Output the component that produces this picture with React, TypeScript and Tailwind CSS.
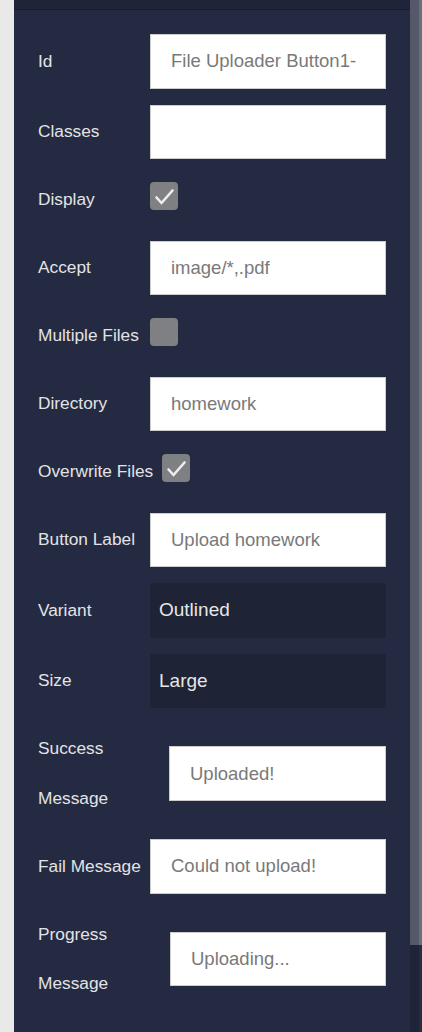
import React from "react";

const labelCls =
  "shrink-0 text-[17.3px] text-[#e3e3e5] font-['Liberation_Sans',Arial,sans-serif]";

function Check({ checked }: { checked: boolean }) {
  return (
    <div className="mt-[7px] h-[28px] w-[28px] shrink-0 self-start rounded-[4px] bg-[#7f8084]">
      {checked && (
        <svg viewBox="0 0 28 28" className="h-[28px] w-[28px]">
          <path
            d="M6.5 15.5 L11.5 21 L22.5 8.5"
            fill="none"
            stroke="#eeeeee"
            strokeWidth="2.6"
            strokeLinecap="round"
            strokeLinejoin="round"
          />
        </svg>
      )}
    </div>
  );
}

function InputBox({ value }: { value: string }) {
  return (
    <div className="flex h-[54.5px] min-w-0 flex-1 items-center border border-[#cdcdcd] bg-white pl-[20px] pr-[20px]">
      <div className="min-w-0 flex-1 overflow-hidden whitespace-nowrap text-[18.5px] text-[#797979]">
        {value}
      </div>
    </div>
  );
}

function InputRow({ label, value, w = "w-[112px]" }: { label: string; value: string; w?: string }) {
  return (
    <div className="flex items-center">
      <div className={`${labelCls} ${w} pt-[1px]`}>{label}</div>
      <InputBox value={value} />
    </div>
  );
}

function TwoLineRow({ l1, l2, value, w }: { l1: string; l2: string; value: string; w: string }) {
  return (
    <div className="flex items-center">
      <div className={`${labelCls} ${w} leading-[49.5px]`}>
        <div>{l1}</div>
        <div>{l2}</div>
      </div>
      <InputBox value={value} />
    </div>
  );
}

function CheckRow({ label, checked, w = "w-[112px]" }: { label: string; checked: boolean; w?: string }) {
  return (
    <div className="flex h-[49.5px] items-center">
      <div className={`${labelCls} ${w} pt-[1px]`}>{label}</div>
      <Check checked={checked} />
    </div>
  );
}

function SelectRow({ label, value }: { label: string; value: string }) {
  return (
    <div className="flex items-center">
      <div className={`${labelCls} w-[112px] pt-[1px]`}>{label}</div>
      <div className="flex h-[54.5px] flex-1 items-center rounded-[3px] bg-[#1e2335] pl-[9px] text-[19px] text-[#e6e6e8]">
        {value}
      </div>
    </div>
  );
}

export default function App() {
  return (
    <div className="flex h-[1032px] w-[422px] overflow-hidden font-['Liberation_Sans',Arial,sans-serif]">
      <div className="w-[14px] shrink-0 bg-[#e9e9e9]" />
      <div className="flex w-[396px] shrink-0 flex-col bg-[#232a42]">
        <div className="h-[10px] shrink-0 border-b border-[#171c2c] bg-[#1f2438]" />
        <div className="flex flex-col gap-[16px] pl-[24px] pr-[24px] pt-[24px]">
          <InputRow label="Id" value="File Uploader Button1-" />
          <InputRow label="Classes" value="" />
          <CheckRow label="Display" checked />
          <InputRow label="Accept" value="image/*,.pdf" />
          <CheckRow label="Multiple Files" checked={false} />
          <InputRow label="Directory" value="homework" />
          <CheckRow label="Overwrite Files" checked w="w-[124px]" />
          <InputRow label="Button Label" value="Upload homework" />
          <SelectRow label="Variant" value="Outlined" />
          <SelectRow label="Size" value="Large" />
          <TwoLineRow l1="Success" l2="Message" value="Uploaded!" w="w-[131px]" />
          <InputRow label="Fail Message" value="Could not upload!" />
          <TwoLineRow l1="Progress" l2="Message" value="Uploading..." w="w-[132px]" />
        </div>
      </div>
      <div className="flex w-[12px] shrink-0 flex-col">
        <div className="flex h-[945px] shrink-0">
          <div className="w-[9px] bg-[#545869]" />
          <div className="flex-1 bg-[#6a6e7c]" />
        </div>
        <div className="flex flex-1">
          <div className="w-[9px] bg-[#1f2539]" />
          <div className="flex-1 bg-[#262c42]" />
        </div>
      </div>
    </div>
  );
}
